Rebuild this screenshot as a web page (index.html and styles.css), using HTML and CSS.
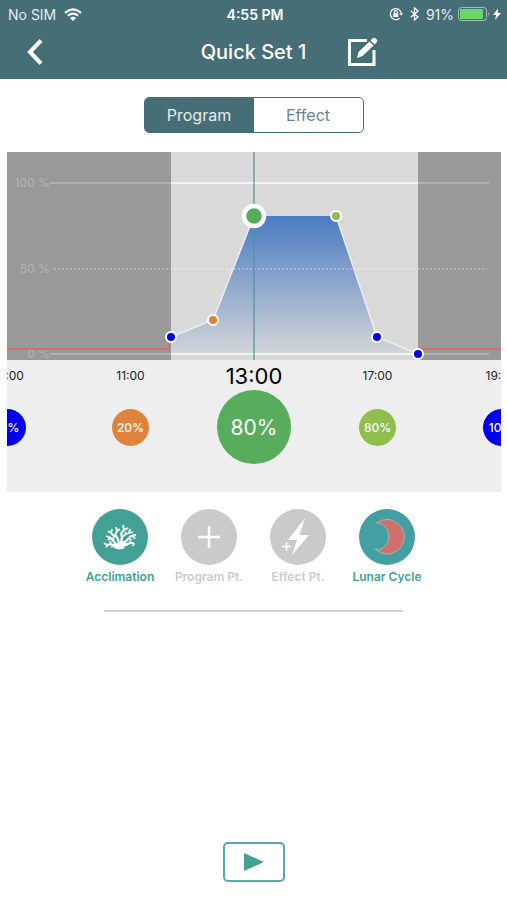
FILE: index.html
```html
<!DOCTYPE html>
<html lang="en">
<head>
    <title>Quick Set 1</title>
    <meta charset="utf-8">
    <meta name="viewport" content="width=device-width, initial-scale=1">
    <link rel="stylesheet" href="styles.css">
</head>
<body>
    <header class="header">
        <div class="status">
            <div class="status-left">
                <span>No SIM</span>
                <svg width="18" height="13" viewBox="0 0 18 13" fill="none" stroke="#fff" stroke-width="2.2">
                    <path d="M1 4.8Q9-2 17 4.8M3.9 7.7Q9 3.4 14.1 7.7"/>
                    <path d="M6 10Q9 7.4 12 10L9 13Z" fill="#fff" stroke="none"/>
                </svg>
            </div>
            <span class="clock">4:55 PM</span>
            <div class="status-right">
                <svg width="14" height="14" viewBox="0 0 14 14" fill="none" stroke="#fff" stroke-width="1.2">
                    <path d="M10.5 11.2A5.5 5.5 0 1 1 12.3 6.5"/>
                    <path d="M10.3 6.2H14L12.2 8.8Z" fill="#fff" stroke="none"/>
                    <rect x="4.3" y="6.3" width="5" height="3.7" fill="#fff" stroke="none"/>
                    <path d="M5.3 6.5V5.2a1.5 1.5 0 0 1 3 0V6.5"/>
                </svg>
                <svg class="bluetooth" width="9" height="14" viewBox="0 0 9 14" fill="none" stroke="#fff" stroke-width="1.3">
                    <path d="M0.8 3.8L8 10L4.5 13V1L8 4L0.8 10.2"/>
                </svg>
                <span>91%</span>
                <svg width="44" height="14" viewBox="0 0 44 14">
                    <rect x="0.5" y="0.5" width="28" height="13" rx="3" fill="none" stroke="#a9bcbf"/>
                    <rect x="2" y="2" width="23" height="10" rx="1" fill="#6dd66b"/>
                    <path d="M30 5q2 2 0 4z" fill="#a9bcbf"/>
                    <path d="M40 1.5L35 8h3.200L37 13L43 6h-3.300z" fill="#fff"/>
                </svg>
            </div>
        </div>
        <nav class="nav">
            <button class="icon-btn back" aria-label="Back">
                <svg width="16" height="26" viewBox="0 0 16 26" fill="none" stroke="#fff" stroke-width="4">
                    <path d="M14 1.5L3 13L14 24.5"/>
                </svg>
            </button>
            <h1>Quick Set 1</h1>
            <button class="icon-btn edit" aria-label="Edit name">
                <svg width="30" height="30" viewBox="0 0 30 30">
                    <path d="M19 3.5H1.5V27.5H26V13" fill="none" stroke="#fff" stroke-width="3"/>
                    <path d="M9 21L10.5 15L21.5 4.5L25.5 8.5L14.5 19Z" fill="#fff"/>
                    <path d="M22.6 3.4L24.5 1.5Q26-0.2 27.7 1.5L28.5 2.3Q30 4 28.5 5.5L26.6 7.4Z" fill="#fff"/>
                </svg>
            </button>
        </nav>
    </header>

    <main>
        <div class="tabs">
            <button class="tab active">Program</button>
            <button class="tab">Effect</button>
        </div>

        <section class="schedule">
            <svg class="chart" viewBox="0 0 494 208">
                <defs>
                    <linearGradient id="light" x1="0" y1="0" x2="0" y2="1">
                        <stop offset="0" stop-color="#4a7bc2"/>
                        <stop offset="1" stop-color="#d9d9d9"/>
                    </linearGradient>
                </defs>
                <rect width="494" height="208" fill="#d9d9d9"/>
                <!-- night -->
                <rect width="164" height="208" fill="#999"/>
                <rect x="411" width="83" height="208" fill="#999"/>
                <!-- light intensity -->
                <path d="M164 185L206 168L247 64H329L370 185L411 202V208H164Z" fill="url(#light)"/>
                <!-- grid lines -->
                <path class="grid-line night" d="M43 31H164M411 31H482M43 202H164M411 202H482"/>
                <path class="grid-line" d="M164 31H411M164 202H411"/>
                <path class="grid-line dotted" d="M47 117H480"/>
                <g class="axis">
                    <text x="43" y="35">100 %</text>
                    <text x="43" y="121">50 %</text>
                    <text x="43" y="206">0 %</text>
                </g>
                <path class="moon-line" d="M0 197H162V187M411 197H494"/>
                <path d="M164 185L206 168L247 64M329 64L370 185L411 202" fill="none" stroke="#e8edf3" stroke-width="1.5"/>
                <path d="M247 0V208" stroke="#4a9498" stroke-opacity="0.6" stroke-width="2"/>
                <!-- program points -->
                <g stroke="#fff" stroke-width="2">
                    <circle cx="164" cy="185" r="5" fill="#00e"/>
                    <circle cx="206" cy="168" r="5" fill="#e08138"/>
                    <circle cx="329" cy="64" r="5" fill="#8bbd4a"/>
                    <circle cx="370" cy="185" r="5" fill="#00e"/>
                    <circle cx="411" cy="202" r="5" fill="#00e"/>
                    <circle cx="247" cy="64" r="10" fill="#58ad5c" stroke-width="4.5"/>
                </g>
            </svg>
            <div class="points">
                <div class="point"><span class="time">09:00</span><button class="dot blue">10%</button></div>
                <div class="point"><span class="time">11:00</span><button class="dot orange">20%</button></div>
                <div class="point selected"><span class="time">13:00</span><button class="dot green">80%</button></div>
                <div class="point"><span class="time">17:00</span><button class="dot lime">80%</button></div>
                <div class="point"><span class="time">19:00</span><button class="dot blue">10%</button></div>
            </div>
        </section>

        <div class="actions">
            <button class="action">
                <svg width="56" height="56" viewBox="0 0 56 56">
                    <circle cx="28" cy="28" r="28" fill="#42a194"/>
                    <g fill="none" stroke="#fff" stroke-linejoin="round">
                        <path d="M23 34L27 35L31 32L36 36L32 37V39L27 40L23 39L24 37L19 38Z" fill="#fff"/>
                        <path stroke-width="2.2" d="M24 36L21 31L17 28M27 35L26 30L23 26M29 34L30 28L29 24M32 34L36 30L39 27M23 38L19 35L15 36M33 36L38 34L42 34"/>
                        <path stroke-width="1.8" d="M21 31L22 27L19 24L20 20M19 24L16 22M23 26L25 22L24 18M25 22L28 20M29 24L32 21L31 16M32 21L36 19M30 28L34 25L37 24L38 20M34 25L33 23M37 24L41 23M39 27L44 26M41 27L43 30M36 30L40 31M17 28L14 27M18 29L16 31M15 36L12 34M16 36L14 38M19 35L18 32M42 34L41 37M38 34L38 32"/>
                    </g>
                </svg>
                <span>Acclimation</span>
            </button>
            <button class="action" disabled>
                <svg width="56" height="56" viewBox="0 0 56 56">
                    <circle cx="28" cy="28" r="28" fill="#cacaca"/>
                    <path d="M28 17V39M17 28H39" stroke="#fff" stroke-width="2.5"/>
                </svg>
                <span>Program Pt.</span>
            </button>
            <button class="action" disabled>
                <svg width="56" height="56" viewBox="0 0 56 56">
                    <circle cx="28" cy="28" r="28" fill="#cacaca"/>
                    <path d="M35 9L18 31H27L22 46L39 26H29.5Z" fill="#fff"/>
                    <path d="M16.5 33V42M12 37.5H21" stroke="#fff" stroke-width="1.5"/>
                </svg>
                <span>Effect Pt.</span>
            </button>
            <button class="action">
                <svg width="56" height="56" viewBox="0 0 56 56">
                    <circle cx="28" cy="28" r="28" fill="#449fa2"/>
                    <path d="M17 14Q22 10.500 28 10.500A17 17 0 0 1 28 45Q21 45 16 40Q18 41 20 41A14 14 0 0 0 21 14.500Q19 13.500 17 14Z" fill="#cf706c" stroke="#a9b3ac"/>
                </svg>
                <span>Lunar Cycle</span>
            </button>
        </div>
        <hr>
    </main>

    <footer>
        <button class="play" aria-label="Play">
            <svg width="20" height="18" viewBox="0 0 20 18"><path d="M0 0L20 9L0 18Z" fill="#42a194"/></svg>
        </button>
    </footer>
</body>
</html>
```

FILE: styles.css
```css
* {
    box-sizing: border-box;
}
body {
    margin: 0;
    min-height: 100vh;
    display: flex;
    flex-direction: column;
    background: #fff;
    font-family: Inter, "Liberation Sans", sans-serif;
}
button {
    padding: 0;
    border: none;
    background: none;
    font-family: inherit;
    cursor: pointer;
}
svg {
    display: block;
}

/* header */
.header {
    background: #466e77;
    color: #fff;
}
.status, .nav {
    display: grid;
    grid-template-columns: 1fr auto 1fr;
    align-items: center;
}
.status {
    height: 28px;
    padding: 0 5px 0 8px;
    font-size: 14px;
}
.status-left, .status-right {
    display: flex;
    align-items: center;
    gap: 8px;
    color: #e4ecee;
}
.status-right {
    justify-content: flex-end;
    gap: 4px;
}
.bluetooth {
    margin: 0 3px;
}
.clock {
    font-weight: 600;
}
.nav {
    height: 51px;
    padding-bottom: 4px;
}
.nav h1 {
    margin: 0;
    font-size: 20px;
    font-weight: 500;
}
.icon-btn {
    justify-self: start;
}
.back {
    margin-left: 27px;
}
.edit {
    margin-left: 42px;
}

/* program / effect switch */
.tabs {
    display: flex;
    width: 220px;
    height: 36px;
    margin: 18px auto 19px;
    border: 1px solid #466e77;
    border-radius: 5px;
    overflow: hidden;
}
.tab {
    flex: 1;
    color: #66868e;
    font-size: 16px;
}
.tab.active {
    background: #466e77;
    color: #e4ecee;
}

/* chart */
.schedule {
    margin: 0 6px 0 7px;
    background: #eee;
    overflow: hidden;
}
.chart {
    width: 100%;
}
.grid-line {
    stroke: #f4f4f4;
    stroke-width: 2;
}
.grid-line.night {
    stroke: #b0b0b0;
}
.grid-line.dotted {
    stroke: #fff;
    stroke-opacity: 0.5;
    stroke-width: 1;
    stroke-dasharray: 2 2;
}
.axis {
    fill: #b0b0b0;
    font-size: 12px;
    font-weight: 500;
    text-anchor: end;
}
.moon-line {
    fill: none;
    stroke: #cf706c;
    stroke-width: 2;
}

/* time wheel, outer points are cut in half */
.points {
    display: grid;
    grid-template-columns: repeat(5, 25%);
    justify-content: center;
    height: 132px;
}
.point {
    display: flex;
    flex-direction: column;
    align-items: center;
}
.time {
    height: 30px;
    line-height: 32px;
    font-size: 12px;
    color: #222;
}
.dot {
    width: 37px;
    height: 37px;
    margin-top: 19px;
    border-radius: 50%;
    color: #fff;
    font-size: 12px;
    font-weight: 500;
}
.selected .time {
    font-size: 22px;
    color: #000;
}
.selected .dot {
    width: 74px;
    height: 74px;
    margin-top: 0;
    font-size: 21px;
    font-weight: 400;
}
.blue { background: #00e; }
.orange { background: #df833c; }
.green { background: #58ad5c; }
.lime { background: #8fbe4d; }

/* actions */
.actions {
    display: grid;
    grid-template-columns: repeat(4, 89px);
    justify-content: center;
    margin-top: 17px;
}
.action {
    display: flex;
    flex-direction: column;
    align-items: center;
    gap: 4px;
    color: #42a194;
    font-size: 12px;
    font-weight: 600;
    line-height: 16px;
    white-space: nowrap;
}
.action:disabled {
    color: #ccc;
    cursor: default;
}
hr {
    width: 59%;
    margin: 25px auto;
    border: none;
    border-top: 2px solid #d2d2d2;
}

/* footer */
footer {
    display: flex;
    justify-content: center;
    margin-top: auto;
    padding-bottom: 18px;
}
.play {
    display: flex;
    align-items: center;
    justify-content: center;
    width: 62px;
    height: 40px;
    border: 2px solid #5aaca1;
    border-radius: 5px;
}
```
